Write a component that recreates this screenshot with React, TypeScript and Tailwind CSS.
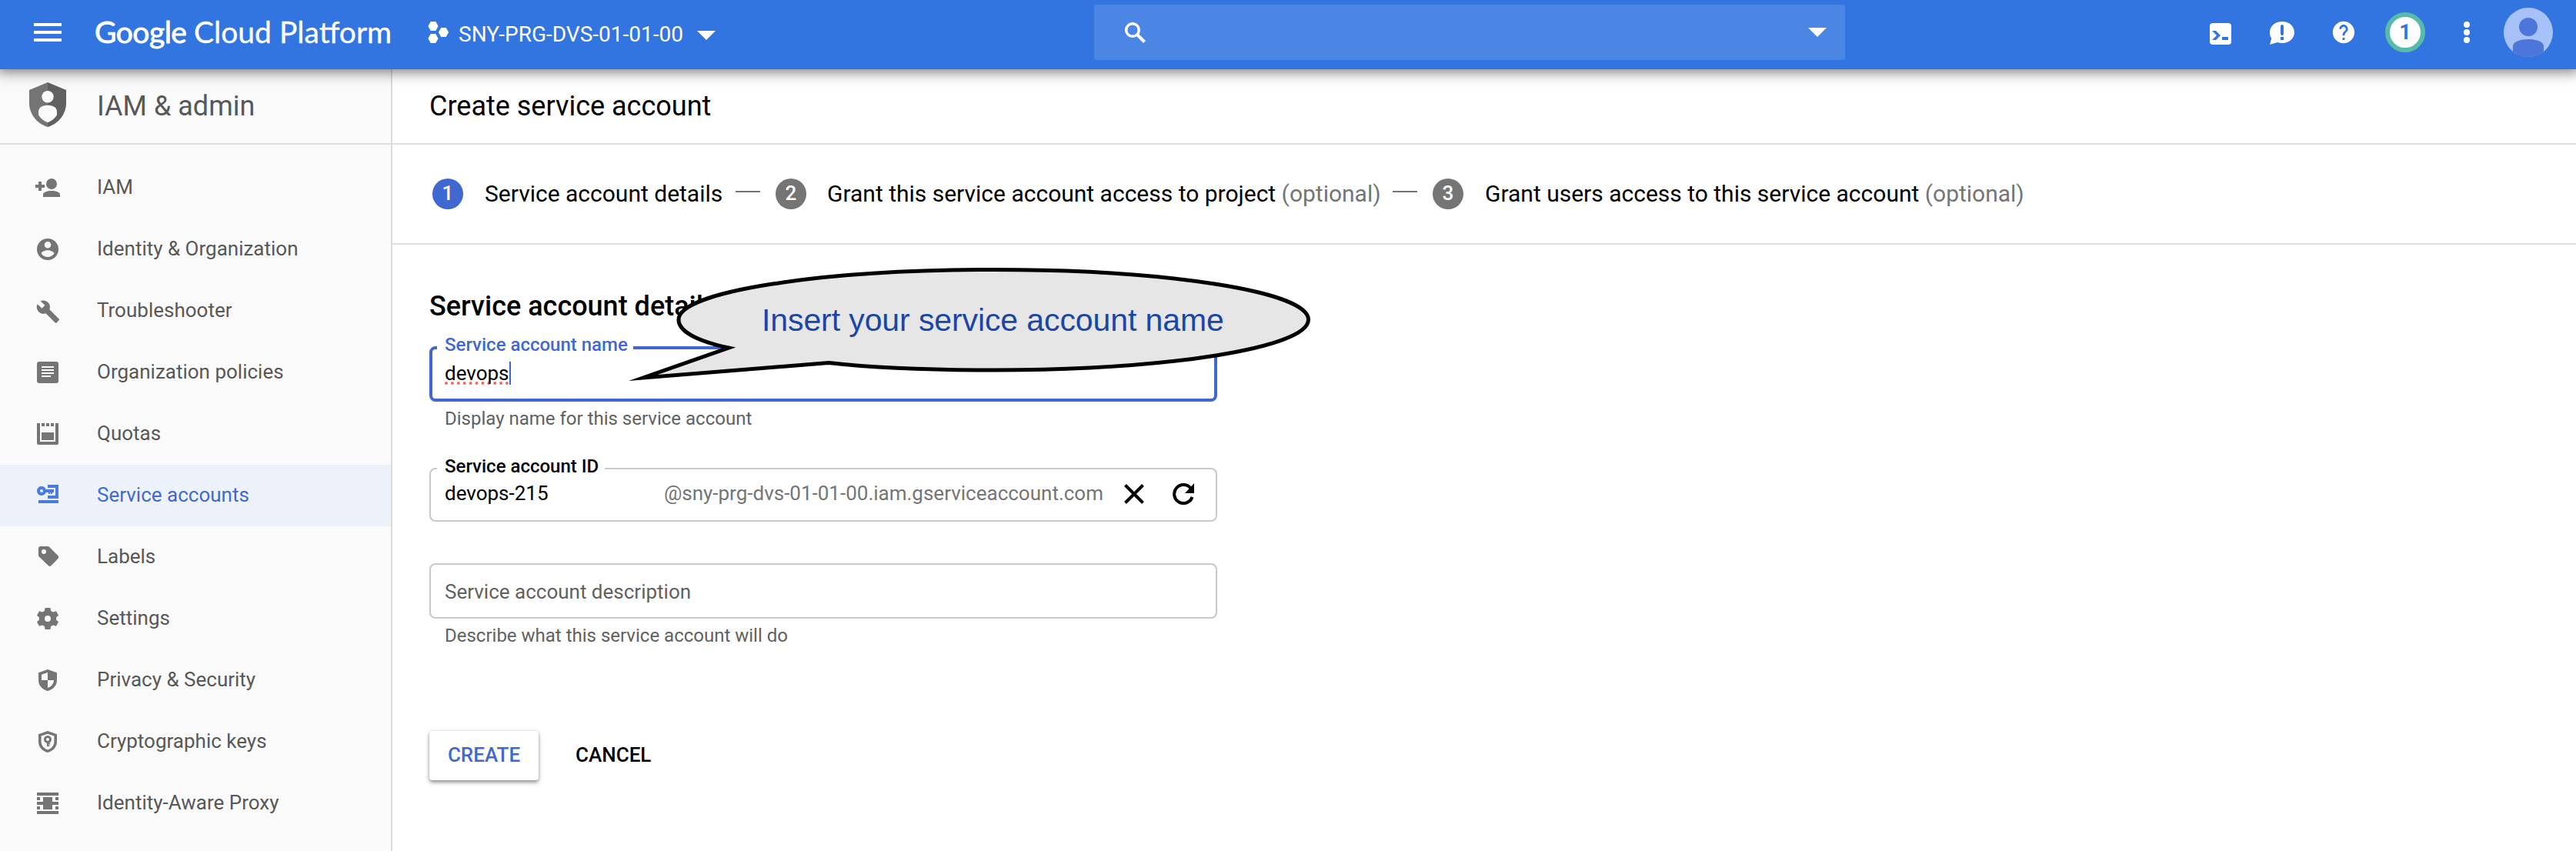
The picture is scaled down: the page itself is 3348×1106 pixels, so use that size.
import React from "react";
import { MdHelp } from "react-icons/md";

type IconProps = { children: React.ReactNode };

function Glyph({ children }: IconProps) {
  return (
    <svg viewBox="0 0 18 18" className="size-9 shrink-0" fill="currentColor" fillRule="evenodd">
      {children}
    </svg>
  );
}

const navItems: { label: string; active?: boolean; icon: React.ReactNode }[] = [
  {
    label: "IAM",
    icon: (
      <>
        <circle cx="11.5" cy="6.5" r="3.5" />
        <path d="M11.5 11C8.7 11 6 11.8 6 13.5V15h11v-1.5c0-1.7-2.7-2.5-5.5-2.5zM5 7V5H3v2H1v2h2v2h2V9h2V7z" />
      </>
    ),
  },
  {
    label: "Identity & Organization",
    icon: (
      <path d="M9 2a7 7 0 100 14A7 7 0 009 2zm0 2a2.100 2.100 0 110 4.300A2.100 2.100 0 019 4zm0 10a5 5 0 01-4.200-2.200C4.800 10.400 7.600 9.600 9 9.600s4.200.8 4.200 2.200A5 5 0 019 14z" />
    ),
  },
  {
    label: "Troubleshooter",
    icon: (
      <path d="M16.300 14.200l-6.100-6.100c.6-1.600.3-3.300-1-4.600C7.900 2.200 5.900 1.900 4.300 2.600l2.900 2.800-2 2-2.900-2.800c-.8 1.600-.4 3.600.9 5 1.300 1.300 3.100 1.600 4.600 1l6.100 6.100c.3.300.7.300.9 0l1.500-1.600c.3-.2.300-.7 0-.9z" />
    ),
  },
  {
    label: "Organization policies",
    icon: (
      <path d="M3.500 2h11A1.500 1.500 0 0116 3.500v11a1.500 1.500 0 01-1.500 1.500h-11A1.500 1.500 0 012 14.500v-11A1.500 1.500 0 013.500 2zM5 5v1h8V5zm0 2v1h8V7zm0 2v1h8V9zm0 2v1h6v-1z" />
    ),
  },
  {
    label: "Quotas",
    icon: (
      <path d="M2 2h2v12h10V2h2v12.700a1.300 1.300 0 01-1.300 1.300H3.300A1.300 1.300 0 012 14.700zM5 2h2v2H5zm3 0h2v2H8zm3 0h2v2h-2zM5 8h8v5H5z" />
    ),
  },
  {
    label: "Service accounts",
    active: true,
    icon: (
      <path d="M5 3a3 3 0 012.800 2H13v2h-1v1h-1V7h-.5v1h-1V7H7.800A3 3 0 115 3zm0 2a1 1 0 100 2 1 1 0 000-2zM9 2h7v9H9V9h5V4H9zM3 12h13v2H3z" />
    ),
  },
  {
    label: "Labels",
    icon: (
      <path d="M4.300 2H9c.4 0 .7.100 1 .4l5.700 5.700c.5.500.5 1.300 0 1.900l-4.400 4.500c-.5.600-1.300.6-1.900 0L3.400 8.800A1.300 1.300 0 013 8V3.300C3 2.600 3.600 2 4.300 2zm2.200 2a1.500 1.500 0 100 3 1.500 1.500 0 000-3z" />
    ),
  },
  {
    label: "Settings",
    icon: (
      <path d="M7.300 2h3.400l.4 2 1.400.8 2-.7L16 6.900 14.500 8.200v1.600L16 11.100l-1.500 2.800-2-.7-1.400.8-.4 2H7.300l-.4-2-1.400-.8-2 .7L2 11.100l1.500-1.300V8.200L2 6.900l1.500-2.800 2 .7L6.900 4zM9 7a2 2 0 100 4 2 2 0 000-4z" />
    ),
  },
  {
    label: "Privacy & Security",
    icon: (
      <path d="M9 2l6 2.100V9c0 3.500-2.600 6.200-6 7-3.400-.8-6-3.500-6-7V4.100zm0 2L5 5.400V9h4zm0 5v5c2.300-.8 3.900-2.600 4-5z" />
    ),
  },
  {
    label: "Cryptographic keys",
    icon: (
      <>
        <path d="M9 2l6 2.100V9c0 3.500-2.600 6.200-6 7-3.400-.8-6-3.500-6-7V4.100zm0 1.900L4.800 5.300V9c0 2.500 1.800 4.500 4.200 5.200 2.400-.7 4.200-2.700 4.200-5.200V5.300z" />
        <path d="M9 5a2.500 2.500 0 11-.01 0zm0 1.500a1 1 0 10.01 0z" />
        <path d="M8.500 9h1v.8h1v1h-1v.4h.7v.8h-1.700z" />
      </>
    ),
  },
  {
    label: "Identity-Aware Proxy",
    icon: (
      <path d="M2 2h14v2H2zM2 5h2v2H2zm12 0h2v2h-2zM6 5h6v3h4v2h-4v3H6v-3H2V8h4zM2 11h2v2H2zm12 0h2v2h-2zM2 14h14v2H2z" />
    ),
  },
];

function CaretDown() {
  return (
    <svg viewBox="0 0 24 12" className="h-3 w-6 shrink-0" fill="#fff">
      <path d="M0 0h24L12 12z" />
    </svg>
  );
}

function TopBar() {
  return (
    <header className="relative z-10 flex h-[90px] shrink-0 items-center bg-[#3275e0] text-white shadow-[0_0_16px_4px_rgba(0,0,0,0.5)]">
      <div className="flex w-[1422px] items-center">
        <button className="ml-11 flex w-9 flex-col gap-1.5 pb-1.5">
          <span className="h-1 bg-white" />
          <span className="h-1 bg-white" />
          <span className="h-1 bg-white" />
        </button>
        <div className="ml-[43px] flex w-[433px] whitespace-nowrap pb-[9px] font-[Lato] text-[39px] leading-[44px]">
          <span className="w-[129px] tracking-[-0.5px] [-webkit-text-stroke:0.8px_white]">Google</span>
          <span className="w-[111px] [-webkit-text-stroke:0.3px_white]">Cloud</span>
          <span className="[-webkit-text-stroke:0.3px_white]">Platform</span>
        </div>
        <svg viewBox="0 0 28 28" className="mb-1.5 h-7 w-7" fill="#fff">
          <path d="M3.800 0h6.400l3.400 6-3.400 6H3.800L.4 6zM3.800 16h6.400l3.400 6-3.400 6H3.800L.4 22zM17.300 8h6.400l3.400 6-3.400 6h-6.400l-3.400-6z" />
        </svg>
        <span className="ml-3 mr-[18px] pb-px text-[28px] leading-8">SNY-PRG-DVS-01-01-00</span>
        <div className="pt-0.5">
          <CaretDown />
        </div>
      </div>
      <div className="mb-1.5 flex h-[72px] w-[976px] items-center justify-between rounded-[4px] bg-[#4b86e5] pl-10 pr-6">
        <svg viewBox="0 0 27 27" className="size-[27px]" fill="none" stroke="#fff">
          <circle cx="10" cy="10" r="8.3" strokeWidth="3.5" />
          <path d="M16 16l9.500 9.500" strokeWidth="4" />
        </svg>
        <CaretDown />
      </div>
      <div className="mb-1.5 ml-auto mr-[30px] flex items-center">
        <svg viewBox="0 0 28 28" className="mt-1 size-7">
          <rect width="28" height="28" rx="4" fill="#fff" />
          <path d="M3 10h5l6 6-6 6H3l6-6zM16 18h8v4h-8z" fill="#3275e0" />
        </svg>
        <svg viewBox="0 0 32 30" className="ml-[50px] mt-0.5 h-[30px] w-8">
          <path d="M16 0c9 0 16 6 16 14s-7 14-16 14c-2 0-4-.3-6-.9L0 30l2.200-8A13 13 0 010 14C0 6 7 0 16 0z" fill="#fff" />
          <path d="M14 6a2 2 0 014 0v10l-1 2h-2l-1-2zM14 20h4v4h-4z" fill="#3275e0" />
        </svg>
        <MdHelp className="ml-[47px] size-[34px]" />
        <span className="ml-[37px] flex size-[52px] items-center justify-center rounded-full border-[6px] border-[#57bba8] bg-white text-[27px] font-bold leading-10 text-[#3275e0]">1</span>
        <div className="ml-[50px] flex w-2 flex-col gap-0.5">
          <span className="size-2 rounded-full bg-white" />
          <span className="size-2 rounded-full bg-white" />
          <span className="size-2 rounded-full bg-white" />
        </div>
        <svg viewBox="0 0 64 64" className="ml-11 size-16">
          <circle cx="32" cy="32" r="32" fill="#a6c2f9" />
          <circle cx="32" cy="25" r="12" fill="#4d76da" />
          <path d="M12 57v-7c0-6 10-9 20-9s20 3 20 9v7a32 32 0 01-40 0z" fill="#4d76da" />
        </svg>
      </div>
    </header>
  );
}

function Sidebar() {
  return (
    <nav className="flex w-[510px] shrink-0 flex-col border-r-2 border-[#dcdcdc] bg-[#fafafa] text-[#585858]">
      <div className="flex h-[98px] items-center border-b-2 border-[#dedede] pl-[38px]">
        <svg viewBox="0 0 48 58" className="mb-1 h-[58px] w-12">
          <path d="M24 0L0 10v17c0 14 10 27 24 31z" fill="#757575" />
          <path d="M24 0l24 10v17c0 14-10 27-24 31z" fill="#616161" />
          <circle cx="24" cy="18.7" r="7.7" fill="#fafafa" />
          <path d="M24 29.700c8 0 12 4 12 8.500v4c-3 5-7 8-12 10-5-2-9-5-12-10v-4c0-4.500 4-8.500 12-8.500z" fill="#fafafa" />
        </svg>
        <h2 className="ml-10 text-[36px] leading-[44px]">IAM &amp; admin</h2>
      </div>
      <ul className="pt-4">
        {navItems.map((item) => (
          <li
            key={item.label}
            className={
              item.active
                ? "flex h-20 items-center gap-[46px] bg-[#ecf1fa] pl-11 text-[#4a7be0]"
                : "flex h-20 items-center gap-[46px] pl-11 text-[#757575]"
            }
          >
            <Glyph>{item.icon}</Glyph>
            <span
              className={
                item.active
                  ? "mb-0.5 text-[26px] leading-8 text-[#3f6ad0]"
                  : "mb-0.5 text-[26px] leading-8 text-[#585858]"
              }
            >
              {item.label}
            </span>
          </li>
        ))}
      </ul>
    </nav>
  );
}

function StepNumber({ n, active }: { n: number; active?: boolean }) {
  return (
    <span
      className={
        active
          ? "flex size-10 items-center justify-center rounded-full bg-[#3f69d0] pb-0.5 text-[26px] font-medium leading-8 text-white"
          : "flex size-10 items-center justify-center rounded-full bg-[#757575] pb-0.5 text-[26px] font-medium leading-8 text-white"
      }
    >
      {n}
    </span>
  );
}

function Stepper() {
  return (
    <ol className="flex h-[130px] items-center whitespace-nowrap border-b-2 border-[#e0e0e0] pl-[52px] text-[30px] leading-[35px] text-black">
      <li className="flex w-[446px] items-center">
        <StepNumber n={1} active />
        <span className="mb-px ml-7">Service account details</span>
        <span className="mb-1.5 ml-auto mr-5 h-0.5 w-8 bg-[#757575]" />
      </li>
      <li className="flex w-[854px] items-center">
        <StepNumber n={2} />
        <span className="mb-px ml-[27px]">
          Grant this service account access to project <span className="text-[#757575]">(optional)</span>
        </span>
        <span className="mb-1.5 ml-auto mr-5 h-0.5 w-8 bg-[#757575]" />
      </li>
      <li className="flex items-center">
        <StepNumber n={3} />
        <span className="mb-px ml-[28px]">
          Grant users access to this service account <span className="text-[#757575]">(optional)</span>
        </span>
      </li>
    </ol>
  );
}

function Callout() {
  return (
    <div className="absolute left-[300px] top-[26px] h-[160px] w-[900px]">
      <svg viewBox="810 344 900 160" className="h-full w-full">
        <path
          d="M947 452C905 443 882 430 882 415.500C882 379 1066 350.500 1291.500 350.500S1700.500 379 1700.500 415.500S1517 481 1291.500 481C1208 481 1135 478 1077 471.500L836 491z"
          fill="#e6e6e6"
          stroke="#000"
          strokeWidth="5"
          strokeMiterlimit="12"
        />
      </svg>
      <span className="absolute left-[180px] top-[48px] whitespace-nowrap font-['Liberation_Sans'] text-[41px] leading-[48px] tracking-[-0.1px] text-[#1a46a6]">
        Insert your service account name
      </span>
    </div>
  );
}

function ServiceAccountForm() {
  return (
    <section className="relative flex w-[1072px] flex-col pl-12 pt-[58px]">
      <h3 className="text-[36px] font-medium leading-[44px] text-black">Service account details</h3>
      <div className="relative mt-[30px] flex h-[72px] items-center rounded-[8px] border-4 border-[#3f69d0] px-4 pb-0.5">
        <span className="absolute -top-5 left-1.5 bg-white pl-2.5 pr-[7px] text-[24px] font-medium leading-7 text-[#3f69d0]">Service account name</span>
        <span className="text-[26px] leading-[30px] text-black underline decoration-[#ef6b62] decoration-dotted decoration-4 underline-offset-2 [text-decoration-skip-ink:none]">devops</span>
        <span className="h-[30px] w-0.5 bg-[#3f69d0]" />
      </div>
      <p className="pl-5 pt-1.5 text-[24px] leading-8 text-[#616161]">Display name for this service account</p>
      <div className="relative mt-12 flex h-[70px] items-center rounded-[8px] border-2 border-[#c9c9c9] pl-[18px] pr-7 text-[26px] leading-[30px] text-black">
        <span className="absolute -top-[18px] left-2 bg-white pl-2.5 pr-2 text-[24px] font-medium leading-7">Service account ID</span>
        <span className="mb-1">devops-215</span>
        <span className="mb-1 ml-auto mr-[27px] text-[#757575]">@sny-prg-dvs-01-01-00.iam.gserviceaccount.com</span>
        <svg viewBox="0 0 26 26" className="mb-0.5 size-[26px]" fill="none" stroke="#000" strokeWidth="4">
          <path d="M1.500 1.500l23 23M24.500 1.500l-23 23" />
        </svg>
        <svg viewBox="0 0 28 28" className="mb-0.5 ml-[37px] size-7">
          <path d="M23.500 6.500A12 12 0 1025.500 18" fill="none" stroke="#000" strokeWidth="4" />
          <path d="M28 0v13H16z" />
        </svg>
      </div>
      <div className="mt-[54px] flex h-[72px] items-center rounded-[8px] border-2 border-[#c9c9c9] pl-[18px] text-[26px] leading-[30px] text-[#616161]">
        <span className="mt-0.5">Service account description</span>
      </div>
      <p className="pl-5 pt-1.5 text-[24px] leading-8 text-[#616161]">Describe what this service account will do</p>
      <div className="mt-[108px] flex items-center text-[26px] font-medium leading-8">
        <button className="h-16 w-[142px] rounded-[4px] bg-white pb-0.5 text-[#3f69d0] shadow-[0_3px_5px_rgba(0,0,0,0.4),0_0_4px_rgba(0,0,0,0.12)]">CREATE</button>
        <button className="ml-12 pb-0.5 text-black">CANCEL</button>
      </div>
      <Callout />
    </section>
  );
}

export default function App() {
  return (
    <div className="flex h-[1106px] w-[3348px] flex-col overflow-hidden bg-white font-[Roboto,sans-serif]">
      <TopBar />
      <div className="flex min-h-0 flex-1">
        <Sidebar />
        <main className="flex min-w-0 flex-1 flex-col">
          <div className="flex h-[98px] shrink-0 items-center border-b-2 border-[#e0e0e0] pl-12">
            <h1 className="text-[36px] leading-[44px] text-black">Create service account</h1>
          </div>
          <Stepper />
          <ServiceAccountForm />
        </main>
      </div>
    </div>
  );
}
